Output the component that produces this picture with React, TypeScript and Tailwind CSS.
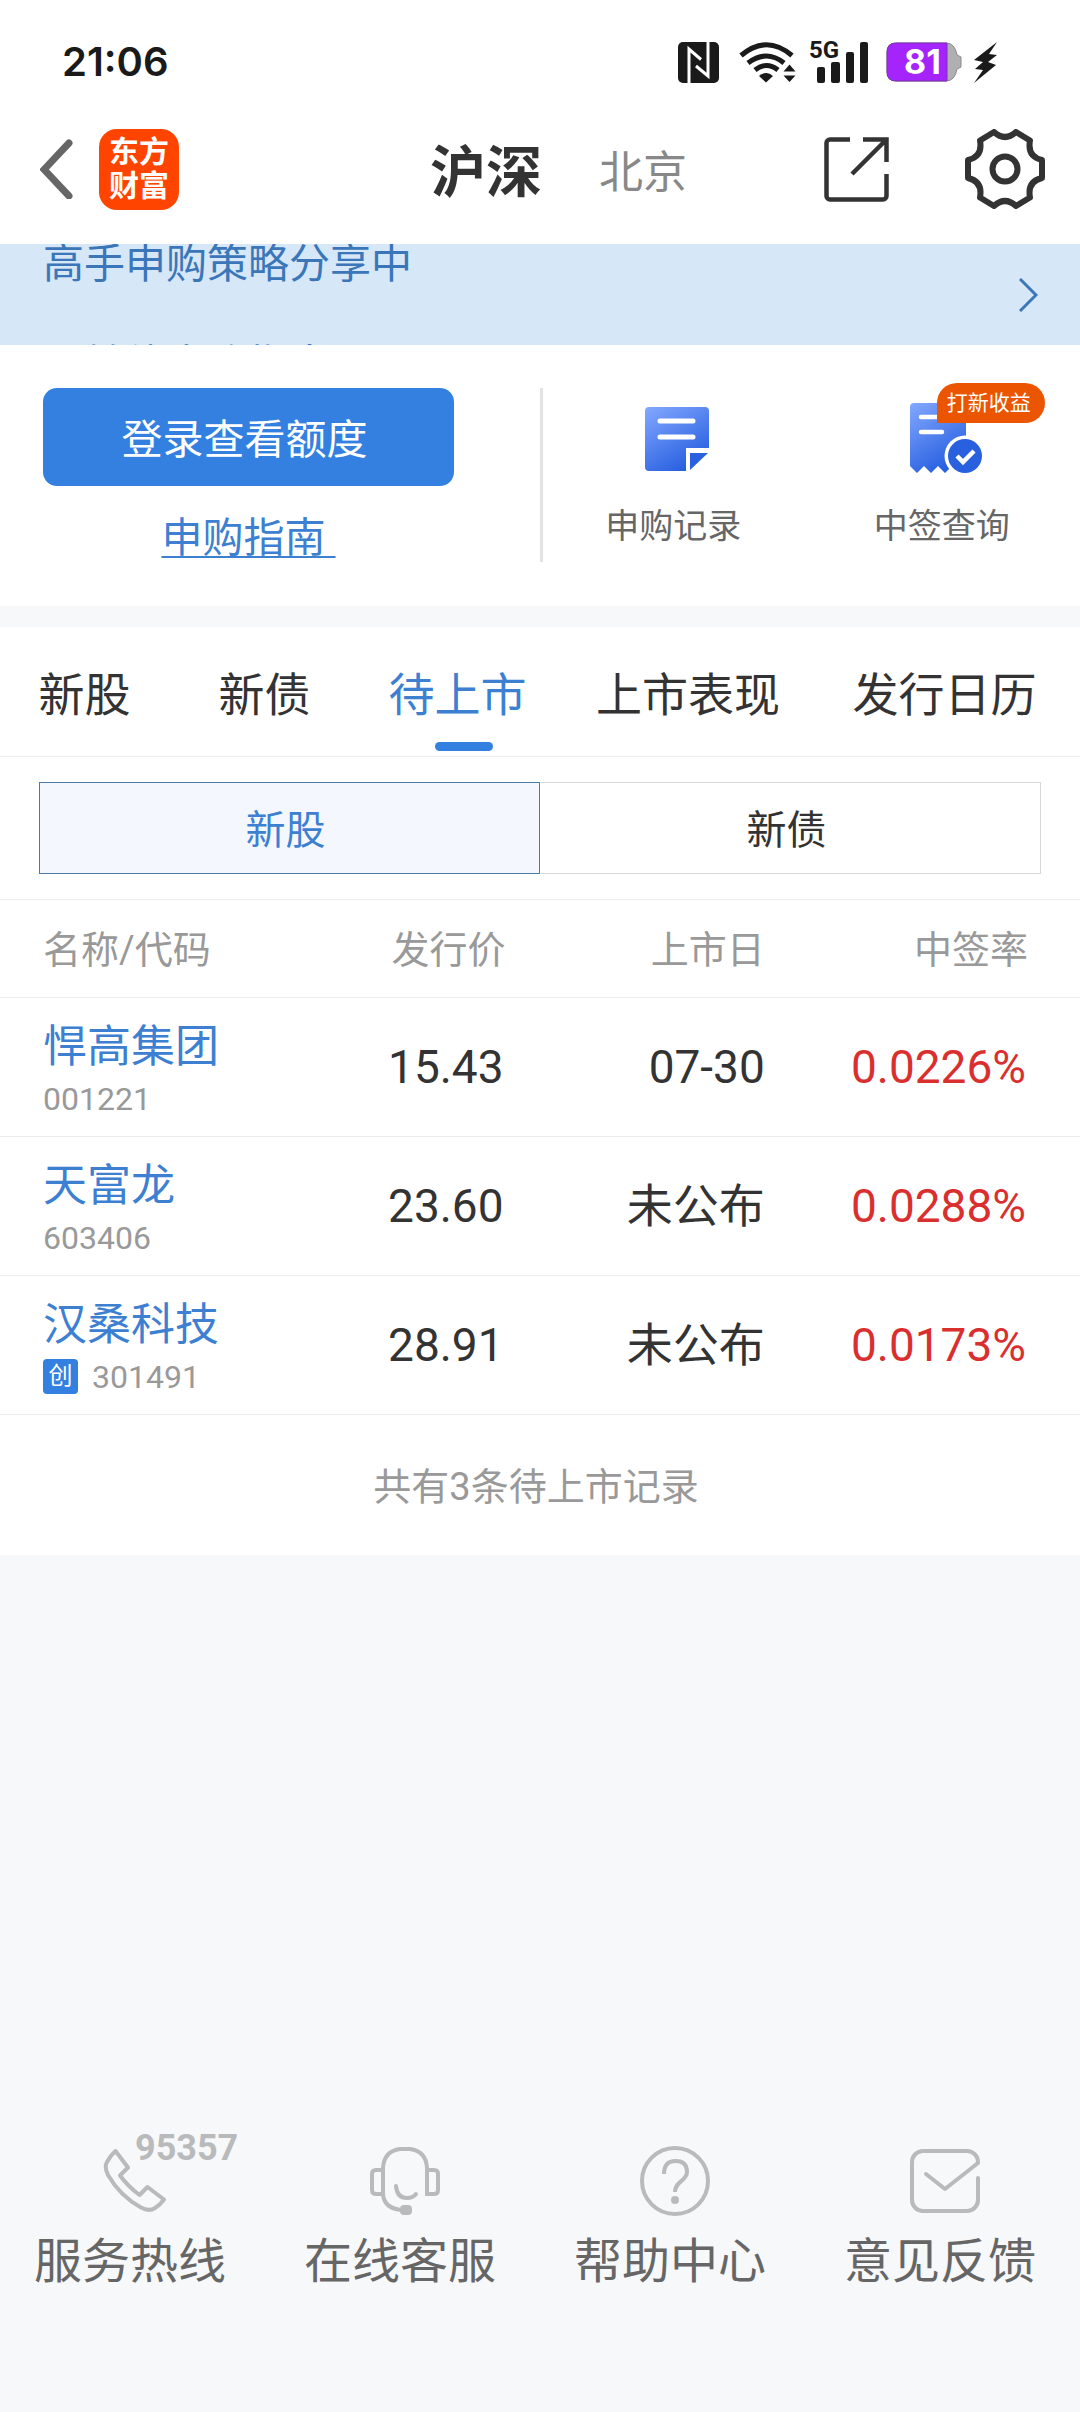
import { useState, type ReactNode } from 'react';

const NOTICES = ['高手申购策略分享中', '可转债申购指南'];

const TABS = ['新股', '新债', '待上市', '上市表现', '发行日历'];

const STOCKS = [
  { name: '悍高集团', code: '001221', board: '', price: '15.43', date: '07-30', rate: '0.0226%' },
  { name: '天富龙', code: '603406', board: '', price: '23.60', date: '未公布', rate: '0.0288%' },
  { name: '汉桑科技', code: '301491', board: '创', price: '28.91', date: '未公布', rate: '0.0173%' },
];

function StatusBar() {
  return (
    <div className="flex h-[124px] items-center justify-between pr-[82px] pl-[62px] text-[#1a1a1a]">
      <span className="font-['Inter',sans-serif] text-[40px] leading-none font-semibold">21:06</span>
      <div className="flex items-center">
        <svg className="h-[41px] w-[41px]" viewBox="0 0 41 41" fill="none">
          <rect width="41" height="41" rx="5" fill="currentColor" />
          <path d="M11 41V7l12 10.500M18 24l12 10V0" stroke="#fff" strokeWidth="3" />
        </svg>
        <svg className="ml-5 h-[41px] w-[57px]" viewBox="0 0 57 41" fill="none" stroke="currentColor" strokeWidth="5">
          <path d="M2 13.500Q27.500-8 53 13.500M9 21q18.500-14 36 0M16 28q11.500-9 23 0" />
          <path d="M20 34q7.500-6 14 0l-7 6.500Z" fill="currentColor" stroke="none" />
          <path d="M50.500 22.500l6 7h-12ZM50.500 40l6-6.500h-12Z" fill="currentColor" stroke="none" />
        </svg>
        <div className="relative ml-[15px]">
          <svg className="h-[41px] w-[58px]" viewBox="0 0 58 41" fill="currentColor">
            <rect x="6" y="25" width="8" height="16" rx="2" />
            <rect x="20" y="20" width="9" height="21" rx="2" />
            <rect x="35" y="10" width="8" height="31" rx="2" />
            <rect x="49" y="0" width="8" height="41" rx="2" />
          </svg>
          <span className="absolute -top-1 -left-0.5 font-['Roboto',sans-serif] text-2xl leading-6 font-bold">5G</span>
        </div>
        <div className="relative ml-[17px]">
          <svg className="h-[40px] w-[76px]" viewBox="0 0 76 40">
            <path d="M10 1h50q9 0 11 12l4 2v10l-4 2q-2 12-11 12H10q-9 0-9-9V10q0-9 9-9Z" fill="#b0b0b0" stroke="#8a8a8a" />
            <path d="M61 1v38H10q-9 0-9-9V10q0-9 9-9Z" fill="#a424fb" stroke="#7a35ad" />
          </svg>
          <span className="absolute inset-y-0 left-[18px] font-['Inter',sans-serif] text-[34px] leading-10 font-bold text-white">
            81
          </span>
        </div>
        <svg className="ml-3 h-[41px] w-[24px]" viewBox="0 0 24 41" fill="currentColor">
          <path d="M23 0 0 18l9 2-8 7 8 1-9 13 22-18-8-3 9-7-8-1Z" />
        </svg>
      </div>
    </div>
  );
}

function Header() {
  return (
    <header className="bg-white">
      <StatusBar />
      <div className="flex h-[120px] items-center pr-[35px] pb-[30px] pl-[40px]">
        <div className="flex flex-1 items-center gap-[26px]">
          <button aria-label="返回">
            <svg className="h-[60px] w-[33px]" viewBox="0 0 33 60" fill="none" stroke="#666" strokeWidth="7">
              <path d="M29 4 4 30.500 29 57" strokeLinecap="round" />
            </svg>
          </button>
          <div className="flex h-[81px] w-[80px] flex-col items-center justify-center rounded-[18px] bg-[#ff4400] text-[30px] leading-[34px] font-bold text-white">
            <span>东方</span>
            <span>财富</span>
          </div>
        </div>
        <nav className="flex items-center gap-[57px] pt-2 pl-8">
          <button className="text-[56px] leading-[64px] font-bold text-[#333]">沪深</button>
          <button className="text-[44px] leading-[64px] text-[#888]">北京</button>
        </nav>
        <div className="flex flex-1 items-center justify-end gap-[76px]">
          <button aria-label="分享">
            <svg className="h-[65px] w-[65px]" viewBox="0 0 65 65" fill="none" stroke="#333" strokeWidth="4.500">
              <path d="M26 2.500H6a3.500 3.500 0 0 0-3.500 3.500v53a3.500 3.500 0 0 0 3.500 3.500h53a3.500 3.500 0 0 0 3.500-3.500V37" />
              <path d="M39 2.500h23.500V25M61 4 28 37" />
            </svg>
          </button>
          <button aria-label="设置">
            <svg className="h-[80px] w-[80px]" viewBox="0 0 80 80" fill="none" stroke="#333" strokeWidth="6" strokeLinejoin="round">
              <path d="M29 3q11 10 22 0l14 8.500q-3 16 12 19.500v18q-15 3.500-12 19.500L51 77q-11-10-22 0l-14-8.500Q18 52.500 3 49V31q15-3.500 12-19.500Z" />
              <circle cx="40" cy="40" r="12.500" />
            </svg>
          </button>
        </div>
      </div>
    </header>
  );
}

function NoticeBar() {
  return (
    <a href="#notice" className="flex h-[101px] justify-between overflow-hidden bg-[#d6e7f8] pr-[42px] pl-[43px] text-[#3b76b8]">
      <div className="-mt-[30px]">
        {NOTICES.map((notice) => (
          <p key={notice} className="text-[41px] leading-[101px]">
            {notice}
          </p>
        ))}
      </div>
      <svg className="h-[34px] w-[19px] self-center" viewBox="0 0 19 34" fill="none" stroke="currentColor" strokeWidth="3">
        <path d="m1 1 16 16L1 33" />
      </svg>
    </a>
  );
}

function RecordIcon() {
  return (
    <svg className="h-16 w-16" viewBox="0 0 64 64">
      <defs>
        <linearGradient id="record" x1="0" y1="0" x2="0.6" y2="1">
          <stop offset="0" stopColor="#84a8ff" />
          <stop offset="1" stopColor="#2860e0" />
        </linearGradient>
      </defs>
      <path d="M4 0h56q4 0 4 4v37H41v23H4q-4 0-4-4V4q0-4 4-4Z" fill="url(#record)" />
      <path d="M45 46h18L45 63Z" fill="#2860e0" />
      <path d="M15 14h33M15 30h33" stroke="#fff" strokeWidth="5" strokeLinecap="round" />
    </svg>
  );
}

function LotteryIcon() {
  return (
    <svg className="h-[72px] w-[72px]" viewBox="0 0 72 72">
      <defs>
        <linearGradient id="lottery" x1="0" y1="0" x2="0.5" y2="1">
          <stop offset="0" stopColor="#84a8ff" />
          <stop offset="1" stopColor="#2860e0" />
        </linearGradient>
      </defs>
      <path d="M4 0h52v60L42 63l-7 7-7-7-7 7-7-7-7 7-7-7V4q0-4 4-4Z" fill="url(#lottery)" />
      <path d="M11 14h22M11 29h21" stroke="#fff" strokeWidth="4.500" strokeLinecap="round" />
      <circle cx="55" cy="53" r="20.500" fill="#fff" />
      <circle cx="55" cy="53" r="17" fill="#2860e0" />
      <path d="m47 53 6 6 11-11" fill="none" stroke="#fff" strokeWidth="4.500" />
    </svg>
  );
}

function QuickEntry({ label, badge, children }: { label: string; badge?: string; children: ReactNode }) {
  return (
    <a href="#entry" className="flex flex-1 flex-col items-center pt-[15px]">
      <div className="relative flex h-[72px] w-[72px] items-center justify-center">
        {children}
        {badge && (
          <span className="absolute -top-5 left-[27px] rounded-[20px] rounded-bl-none bg-[#eb5500] pr-3.5 pl-2.5 text-[21px] leading-10 whitespace-nowrap text-white">
            {badge}
          </span>
        )}
      </div>
      <span className="mt-[27px] pr-2 text-[34px] leading-[48px] text-[#666]">{label}</span>
    </a>
  );
}

function AccountPanel() {
  return (
    <section className="flex bg-white pt-[43px] pb-[44px]">
      <div className="flex w-1/2 flex-col items-center pr-[86px] pl-[43px]">
        <button className="h-[98px] w-full rounded-[14px] bg-[#3380e1] pt-2 pr-2 text-[41px] text-white">登录查看额度</button>
        <a href="#guide" className="mt-7 text-[41px] leading-[48px] text-[#3d80d2] underline decoration-2 underline-offset-4">
          申购指南&nbsp;
        </a>
      </div>
      <div className="flex w-1/2 border-l-3 border-[#e3e3e3]">
        <QuickEntry label="申购记录">
          <RecordIcon />
        </QuickEntry>
        <QuickEntry label="中签查询" badge="打新收益">
          <LotteryIcon />
        </QuickEntry>
      </div>
    </section>
  );
}

function StockTable() {
  return (
    <table className="w-full table-fixed">
      <thead>
        <tr className="h-[97px] border-b border-[#ececec] text-[38px] leading-[48px] text-[#999]">
          <th className="w-[23%] pt-1 pl-[43px] text-left font-normal whitespace-nowrap">名称/代码</th>
          <th className="w-[24%] pt-1 pr-0.5 text-right font-normal">发行价</th>
          <th className="w-[24%] pt-1 pr-0.5 text-right font-normal">上市日</th>
          <th className="w-[29%] pt-1 pr-[52px] text-right font-normal">中签率</th>
        </tr>
      </thead>
      <tbody>
        {STOCKS.map((stock) => (
          <tr key={stock.code} className="h-[139px] border-b border-[#ececec] text-[46px] leading-[56px] text-[#333]">
            <td className="pt-2 pl-[43px] whitespace-nowrap">
              <a href="#stock" className="block text-[44px] text-[#3d80d2]">
                {stock.name}
              </a>
              <span className="flex items-center gap-[14px] text-[32px] leading-[48px] text-[#999]">
                {stock.board && (
                  <span className="h-[35px] w-[35px] rounded-[4px] bg-[#3380e1] text-center text-2xl leading-[35px] text-white">
                    {stock.board}
                  </span>
                )}
                {stock.code}
              </span>
            </td>
            <td className="pr-1 text-right">{stock.price}</td>
            <td className="pr-0.5 text-right">{stock.date}</td>
            <td className="pr-[54px] text-right text-[#d9302f]">{stock.rate}</td>
          </tr>
        ))}
      </tbody>
    </table>
  );
}

function Listings() {
  const [tab, setTab] = useState('待上市');
  const [kind, setKind] = useState('新股');

  return (
    <section className="mt-[21px] bg-white">
      <div className="grid h-[130px] grid-cols-[169fr_191fr_195fr_266fr_247fr] border-b border-[#ececec] px-1.5">
        {TABS.map((item) => (
          <button
            key={item}
            onClick={() => setTab(item)}
            className={`relative pt-2 pr-3 text-[46px] whitespace-nowrap ${item === tab ? 'text-[#3d80d2]' : 'text-[#333]'}`}
          >
            {item}
            {item === tab && (
              <span className="absolute bottom-[5px] left-1/2 h-[9px] w-[58px] -translate-x-1/2 rounded-full bg-[#3380e1]" />
            )}
          </button>
        ))}
      </div>
      <div className="flex border-b border-[#ececec] px-[39px] py-[25px]">
        {['新股', '新债'].map((item) => (
          <button
            key={item}
            onClick={() => setKind(item)}
            className={`h-[92px] flex-1 border pt-1.5 pr-2 text-[40px] ${
              item === kind ? 'border-[#4a7ba6] bg-[#f4f8fe] text-[#3d80d2]' : 'border-[#d6d6d6] border-l-transparent text-[#333]'
            }`}
          >
            {item}
          </button>
        ))}
      </div>
      <StockTable />
      <p className="pt-[48px] pr-2 pb-[44px] text-center text-[38px] leading-[48px] text-[#999]">共有3条待上市记录</p>
    </section>
  );
}

function ServiceLink({ label, children }: { label: string; children: ReactNode }) {
  return (
    <a href="#service" className="flex flex-1 flex-col items-center">
      <div className="relative flex h-[70px] items-center text-[#b9babb]">{children}</div>
      <span className="mt-3.5 pr-2.5 text-5xl leading-[64px] text-[#666]">{label}</span>
    </a>
  );
}

function ServiceFooter() {
  return (
    <footer className="mt-auto flex pb-[118px]">
      <ServiceLink label="服务热线">
        <svg className="h-[64px] w-[64px]" viewBox="0 0 64 64" fill="none" stroke="currentColor" strokeWidth="4" strokeLinejoin="round">
          <path d="M12.500 2 25 18.500l-8 8q8 11 19.500 19.500l8-8L61 50.500Q57 56 52 59q-6 4-14-.5Q17 47 5 26 1 18 4 13q3-6 8.500-11Z" />
        </svg>
        <span className="absolute -top-4 left-1/2 font-['Roboto',sans-serif] text-4xl leading-9 font-bold">95357</span>
      </ServiceLink>
      <ServiceLink label="在线客服">
        <svg className="h-[70px] w-[70px]" viewBox="0 0 70 70" fill="none" stroke="currentColor" strokeWidth="4">
          <path d="M13 48V22Q14 5 30 3h10q16 2 17 19v26h7q4 0 4-4V28q0-4-4-4h-7M13 24H6q-4 0-4 4v16q0 4 4 4h7q1 14 18 16" />
          <path d="M26 40q1 12 11 12 6 0 9-4" strokeLinecap="round" />
          <rect x="30" y="59" width="12" height="10" rx="4" fill="currentColor" stroke="none" />
        </svg>
      </ServiceLink>
      <ServiceLink label="帮助中心">
        <svg className="h-[70px] w-[70px]" viewBox="0 0 70 70" fill="none" stroke="currentColor" strokeWidth="4">
          <circle cx="35" cy="35" r="33" />
          <path d="M24 28q0-13 11.500-13T47 26c0 9-12 9-12 20" />
          <circle cx="35" cy="54" r="4" fill="currentColor" stroke="none" />
        </svg>
      </ServiceLink>
      <ServiceLink label="意见反馈">
        <svg className="h-[64px] w-[70px]" viewBox="0 0 70 64" fill="none" stroke="currentColor" strokeWidth="4" strokeLinejoin="round">
          <path d="m16 25 19 15 33-26v-1A11 11 0 0 0 57 2H13A11 11 0 0 0 2 13v38a11 11 0 0 0 11 11h44a11 11 0 0 0 11-11V29" strokeLinecap="round" />
        </svg>
      </ServiceLink>
    </footer>
  );
}

export default function App() {
  return (
    <div className="flex min-h-screen flex-col bg-[#f7f8fa] font-['Roboto','Noto_Sans_CJK_SC',sans-serif]">
      <Header />
      <NoticeBar />
      <AccountPanel />
      <Listings />
      <ServiceFooter />
    </div>
  );
}
